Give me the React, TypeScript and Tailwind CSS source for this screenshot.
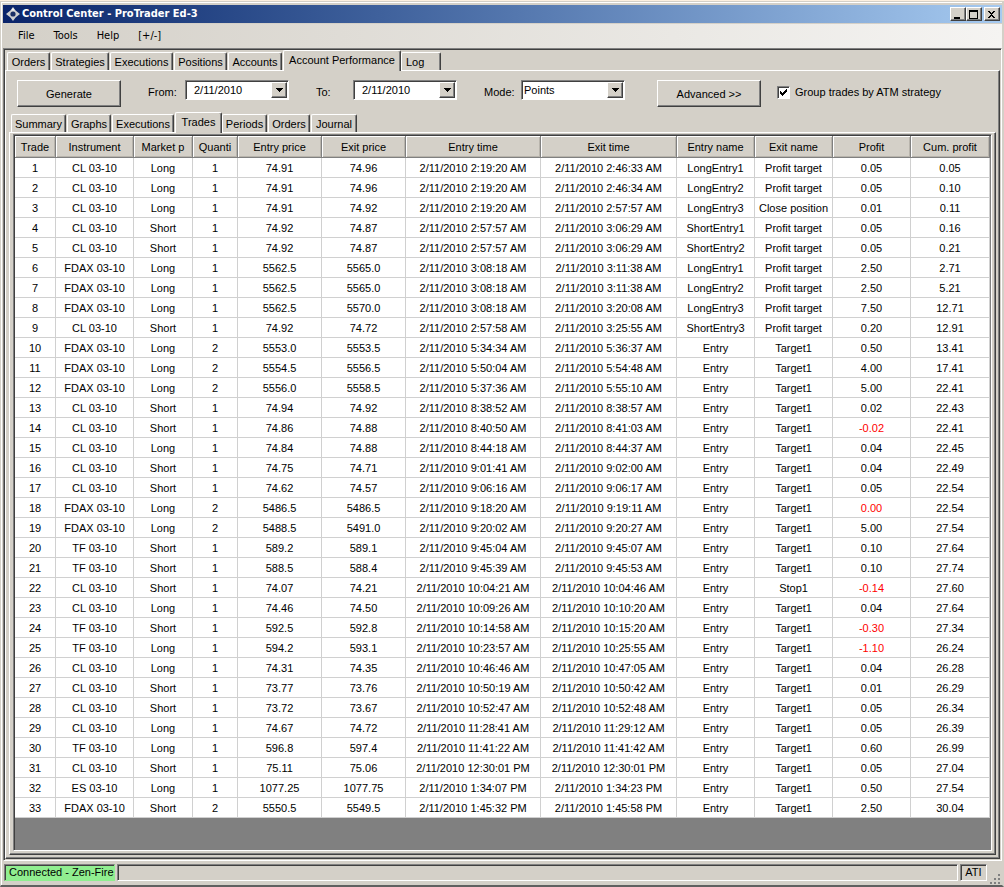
import { useState } from "react";
import type { ReactNode } from "react";

type Trade = [string, string, string, string, string, string, string, string, string, string, string];

const DAY = "2/11/2010 ";

// instrument, market pos, qty, entry price, exit price, entry time, exit time, entry name, exit name, profit, cum. profit
const trades: Trade[] = [
  ["CL 03-10", "Long", "1", "74.91", "74.96", "2:19:20 AM", "2:46:33 AM", "LongEntry1", "Profit target", "0.05", "0.05"],
  ["CL 03-10", "Long", "1", "74.91", "74.96", "2:19:20 AM", "2:46:34 AM", "LongEntry2", "Profit target", "0.05", "0.10"],
  ["CL 03-10", "Long", "1", "74.91", "74.92", "2:19:20 AM", "2:57:57 AM", "LongEntry3", "Close position", "0.01", "0.11"],
  ["CL 03-10", "Short", "1", "74.92", "74.87", "2:57:57 AM", "3:06:29 AM", "ShortEntry1", "Profit target", "0.05", "0.16"],
  ["CL 03-10", "Short", "1", "74.92", "74.87", "2:57:57 AM", "3:06:29 AM", "ShortEntry2", "Profit target", "0.05", "0.21"],
  ["FDAX 03-10", "Long", "1", "5562.5", "5565.0", "3:08:18 AM", "3:11:38 AM", "LongEntry1", "Profit target", "2.50", "2.71"],
  ["FDAX 03-10", "Long", "1", "5562.5", "5565.0", "3:08:18 AM", "3:11:38 AM", "LongEntry2", "Profit target", "2.50", "5.21"],
  ["FDAX 03-10", "Long", "1", "5562.5", "5570.0", "3:08:18 AM", "3:20:08 AM", "LongEntry3", "Profit target", "7.50", "12.71"],
  ["CL 03-10", "Short", "1", "74.92", "74.72", "2:57:58 AM", "3:25:55 AM", "ShortEntry3", "Profit target", "0.20", "12.91"],
  ["FDAX 03-10", "Long", "2", "5553.0", "5553.5", "5:34:34 AM", "5:36:37 AM", "Entry", "Target1", "0.50", "13.41"],
  ["FDAX 03-10", "Long", "2", "5554.5", "5556.5", "5:50:04 AM", "5:54:48 AM", "Entry", "Target1", "4.00", "17.41"],
  ["FDAX 03-10", "Long", "2", "5556.0", "5558.5", "5:37:36 AM", "5:55:10 AM", "Entry", "Target1", "5.00", "22.41"],
  ["CL 03-10", "Short", "1", "74.94", "74.92", "8:38:52 AM", "8:38:57 AM", "Entry", "Target1", "0.02", "22.43"],
  ["CL 03-10", "Short", "1", "74.86", "74.88", "8:40:50 AM", "8:41:03 AM", "Entry", "Target1", "-0.02", "22.41"],
  ["CL 03-10", "Long", "1", "74.84", "74.88", "8:44:18 AM", "8:44:37 AM", "Entry", "Target1", "0.04", "22.45"],
  ["CL 03-10", "Short", "1", "74.75", "74.71", "9:01:41 AM", "9:02:00 AM", "Entry", "Target1", "0.04", "22.49"],
  ["CL 03-10", "Short", "1", "74.62", "74.57", "9:06:16 AM", "9:06:17 AM", "Entry", "Target1", "0.05", "22.54"],
  ["FDAX 03-10", "Long", "2", "5486.5", "5486.5", "9:18:20 AM", "9:19:11 AM", "Entry", "Target1", "0.00", "22.54"],
  ["FDAX 03-10", "Long", "2", "5488.5", "5491.0", "9:20:02 AM", "9:20:27 AM", "Entry", "Target1", "5.00", "27.54"],
  ["TF 03-10", "Short", "1", "589.2", "589.1", "9:45:04 AM", "9:45:07 AM", "Entry", "Target1", "0.10", "27.64"],
  ["TF 03-10", "Short", "1", "588.5", "588.4", "9:45:39 AM", "9:45:53 AM", "Entry", "Target1", "0.10", "27.74"],
  ["CL 03-10", "Short", "1", "74.07", "74.21", "10:04:21 AM", "10:04:46 AM", "Entry", "Stop1", "-0.14", "27.60"],
  ["CL 03-10", "Long", "1", "74.46", "74.50", "10:09:26 AM", "10:10:20 AM", "Entry", "Target1", "0.04", "27.64"],
  ["TF 03-10", "Short", "1", "592.5", "592.8", "10:14:58 AM", "10:15:20 AM", "Entry", "Target1", "-0.30", "27.34"],
  ["TF 03-10", "Long", "1", "594.2", "593.1", "10:23:57 AM", "10:25:55 AM", "Entry", "Target1", "-1.10", "26.24"],
  ["CL 03-10", "Long", "1", "74.31", "74.35", "10:46:46 AM", "10:47:05 AM", "Entry", "Target1", "0.04", "26.28"],
  ["CL 03-10", "Short", "1", "73.77", "73.76", "10:50:19 AM", "10:50:42 AM", "Entry", "Target1", "0.01", "26.29"],
  ["CL 03-10", "Short", "1", "73.72", "73.67", "10:52:47 AM", "10:52:48 AM", "Entry", "Target1", "0.05", "26.34"],
  ["CL 03-10", "Long", "1", "74.67", "74.72", "11:28:41 AM", "11:29:12 AM", "Entry", "Target1", "0.05", "26.39"],
  ["TF 03-10", "Long", "1", "596.8", "597.4", "11:41:22 AM", "11:41:42 AM", "Entry", "Target1", "0.60", "26.99"],
  ["CL 03-10", "Short", "1", "75.11", "75.06", "12:30:01 PM", "12:30:01 PM", "Entry", "Target1", "0.05", "27.04"],
  ["ES 03-10", "Long", "1", "1077.25", "1077.75", "1:34:07 PM", "1:34:23 PM", "Entry", "Target1", "0.50", "27.54"],
  ["FDAX 03-10", "Short", "2", "5550.5", "5549.5", "1:45:32 PM", "1:45:58 PM", "Entry", "Target1", "2.50", "30.04"],
];

const columns = [
  { label: "Trade", width: "w-[41px]" },
  { label: "Instrument", width: "w-[78px]" },
  { label: "Market p", width: "w-[59px]" },
  { label: "Quanti", width: "w-[45px]" },
  { label: "Entry price", width: "w-[84px]" },
  { label: "Exit price", width: "w-[84px]" },
  { label: "Entry time", width: "w-[135px]" },
  { label: "Exit time", width: "w-[136px]" },
  { label: "Entry name", width: "w-[78px]" },
  { label: "Exit name", width: "w-[78px]" },
  { label: "Profit", width: "w-[78px]" },
  { label: "Cum. profit", width: "w-[79px]" },
];

const mainTabs = [
  { label: "Orders", width: "w-[43px]" },
  { label: "Strategies", width: "w-[58px]" },
  { label: "Executions", width: "w-[63px]" },
  { label: "Positions", width: "w-[53px]" },
  { label: "Accounts", width: "w-[54px]" },
  { label: "Account Performance", width: "w-[118px]" },
  { label: "Log", width: "w-[40px] pl-1 text-left" },
];

const reportTabs = [
  { label: "Summary", width: "w-[55px]" },
  { label: "Graphs", width: "w-[44px]" },
  { label: "Executions", width: "w-[62px]" },
  { label: "Trades", width: "w-[47px]" },
  { label: "Periods", width: "w-[45px]" },
  { label: "Orders", width: "w-[42px]" },
  { label: "Journal", width: "w-[46px]" },
];

const raised =
  "border border-t-white border-l-white border-r-[#404040] border-b-[#404040] shadow-[inset_-1px_-1px_0_#808080]";
const sunken =
  "border border-t-[#808080] border-l-[#808080] border-r-white border-b-white shadow-[inset_1px_1px_0_#404040]";

function Tabs({ tabs, initial, name }: { tabs: { label: string; width: string }[]; initial: string; name: string }) {
  const [active, setActive] = useState(initial);
  return (
    <div role="tablist" aria-label={name} className="flex h-5 items-end">
      {tabs.map((t) => {
        const on = t.label === active;
        return (
          <button
            key={t.label}
            role="tab"
            aria-selected={on}
            onClick={() => setActive(t.label)}
            className={`${t.width} shrink-0 rounded-t-[2px] border-t border-r border-l border-t-white border-r-[#404040] border-l-white bg-[#d4d0c8] whitespace-nowrap shadow-[inset_-1px_0_0_#808080] ${
              on ? "relative -mb-px h-[21px] pb-[2px]" : "mr-px h-[18px]"
            }`}
          >
            {t.label}
          </button>
        );
      })}
    </div>
  );
}

function CaptionButton({ label, children }: { label: string; children: ReactNode }) {
  return (
    <button aria-label={label} className={`flex h-[14px] w-4 items-center justify-center bg-[#d4d0c8] ${raised}`}>
      <svg width="10" height="9" viewBox="0 0 10 9" shapeRendering="crispEdges">
        {children}
      </svg>
    </button>
  );
}

function Combo({ id, label, value, indent }: { id: string; label: string; value: string; indent: string }) {
  return (
    <div className="flex">
      <label htmlFor={id} className="w-[37px] leading-6">
        {label}
      </label>
      <div className={`relative h-5 w-[104px] bg-white ${sunken}`}>
        <select id={id} defaultValue={value} className={`h-full w-full appearance-none pb-px outline-none ${indent}`}>
          <option>{value}</option>
        </select>
        <span
          className={`pointer-events-none absolute top-px right-px bottom-px flex w-4 items-center justify-center bg-[#d4d0c8] ${raised}`}
        >
          <svg width="7" height="4" viewBox="0 0 7 4" shapeRendering="crispEdges">
            <path d="M0 0h7v1H6v1H5v1H4v1H3V3H2V2H1V1H0z" />
          </svg>
        </span>
      </div>
    </div>
  );
}

function TradeGrid() {
  return (
    <table className="w-full table-fixed border-separate border-spacing-0 text-center">
      <thead>
        <tr>
          {columns.map((c) => (
            <th
              key={c.label}
              className={`${c.width} h-[22px] overflow-hidden border-r border-b border-[#808080] bg-[#d4d0c8] p-0 pt-px font-normal whitespace-nowrap shadow-[inset_1px_1px_0_#fff,inset_-1px_-1px_0_#b8b4ac]`}
            >
              {c.label}
            </th>
          ))}
        </tr>
      </thead>
      <tbody>
        {trades.map(([instrument, pos, qty, entry, exit, entryTime, exitTime, entryName, exitName, profit, cum], i) => (
          <tr key={i}>
            {[i + 1, instrument, pos, qty, entry, exit, DAY + entryTime, DAY + exitTime, entryName, exitName, profit, cum].map(
              (cell, j) => (
                <td
                  key={j}
                  className={`h-5 border-r border-b border-[#d0d0d0] bg-white p-0 whitespace-nowrap ${
                    j === 10 && Number(profit) <= 0 ? "text-[#ff0000]" : ""
                  }`}
                >
                  {cell}
                </td>
              )
            )}
          </tr>
        ))}
      </tbody>
    </table>
  );
}

export default function App() {
  return (
    <div className="flex min-h-screen flex-col bg-[#d4d0c8] font-['Liberation_Sans',Arial,sans-serif] text-[11px] leading-[14px] text-black">
      <div className="h-px bg-[#fdf0e0]" />
      <div className="flex grow flex-col border-t border-r-2 border-b-2 border-l border-t-[#d4d0c8] border-r-[#d4d0c8] border-b-[#606060] border-l-[#d4d0c8]">
        <div className="flex grow flex-col border-t border-l border-white pt-[2px] pl-px">
          <header className="flex h-[18px] items-center gap-[2px] bg-linear-to-r from-[#0a246a] to-[#a6caf0] pr-[2px] pl-[3px]">
            <svg width="14" height="14" viewBox="0 0 14 14">
              <path
                d="M7 0 9.400 3.200 10.800 4.600 14 7 10.800 9.400 9.400 10.800 7 14 4.600 10.800 3.200 9.400 0 7 3.200 4.600 4.600 3.200z"
                fill="#d0d0d0"
              />
              <path d="M7 1 8.800 3.600H5.200z" fill="#f4f4f4" />
              <circle cx="7" cy="7" r="2.600" fill="#1b2f66" />
            </svg>
            <h1 className="grow font-['DejaVu_Sans_Condensed','DejaVu_Sans',sans-serif] font-bold text-white">
              Control Center - ProTrader Ed-3
            </h1>
            <div className="flex">
              <CaptionButton label="Minimize">
                <path d="M1 7h6v2H1z" />
              </CaptionButton>
              <CaptionButton label="Maximize">
                <path d="M0 0h9v9H0zM1 2v6h7V2z" fillRule="evenodd" />
              </CaptionButton>
              <span className="w-[2px]" />
              <CaptionButton label="Close">
                <path d="M1 1h2v1h1v1h1V2h1V1h2v1H7v1H6v1H5v1h1v1h1v1h1v1H6V7H5V6H4v1H3v1H1V7h1V6h1V5h1V4H3V3H2V2H1z" />
              </CaptionButton>
            </div>
          </header>
          <nav className="flex h-[25px] items-center gap-[19px] border-t border-t-[#d4d0c8] bg-linear-to-r from-[#d4d0c8] to-[#f5f4f2] pl-[15px] font-['DejaVu_Sans_Condensed','DejaVu_Sans',sans-serif]">
            <button>File</button>
            <button>Tools</button>
            <button>Help</button>
            <button>[+/-]</button>
          </nav>
          <main className={`flex grow flex-col pt-[1px] pl-[1px] ${sunken}`}>
            <div className="pl-[2px]">
              <Tabs tabs={mainTabs} initial="Account Performance" name="Windows" />
            </div>
            <section className={`mr-px mb-px flex grow flex-col px-[3px] pb-[3px] ${raised}`}>
              <form className="flex h-[41px] items-start pt-[9px] pl-2" onSubmit={(e) => e.preventDefault()}>
                <button className={`mr-[27px] h-[27px] w-[104px] ${raised}`}>Generate</button>
                <div className="flex gap-[27px]">
                  <Combo id="from" label="From:" value="2/11/2010" indent="pl-2" />
                  <Combo id="to" label="To:" value="2/11/2010" indent="pl-2" />
                  <Combo id="mode" label="Mode:" value="Points" indent="pl-[2px]" />
                </div>
                <button className={`ml-8 h-[27px] w-[104px] ${raised}`}>Advanced &gt;&gt;</button>
                <label className="ml-4 flex h-6 items-center gap-[5px]">
                  <span className={`relative h-[13px] w-[13px] bg-white ${sunken}`}>
                    <input type="checkbox" defaultChecked className="peer absolute inset-0 appearance-none" />
                    <svg
                      width="7"
                      height="7"
                      viewBox="0 0 7 7"
                      shapeRendering="crispEdges"
                      className="pointer-events-none absolute top-[2px] left-[2px] hidden peer-checked:block"
                    >
                      <path d="M0 2h1v1h1v1h1V3h1V2h1V1h1V0h1v3H6v1H5v1H4v1H3v1H2V6H1V5H0z" />
                    </svg>
                  </span>
                  Group trades by ATM strategy
                </label>
              </form>
              <div className="pl-[2px]">
                <Tabs tabs={reportTabs} initial="Trades" name="Report" />
              </div>
              <div className={`flex grow flex-col pt-px pr-[3px] pb-[3px] pl-[3px] ${raised}`}>
                <div className={`grow bg-[#808080] pt-px pr-px pl-px ${sunken}`}>
                  <TradeGrid />
                </div>
              </div>
            </section>
          </main>
          <footer className="flex h-6 items-start gap-[2px] pt-[3px] pr-px pl-px">
            <div className="h-[17px] w-[111px] border border-t-[#808080] border-r-[#90ee90] border-b-[#90ee90] border-l-[#808080] bg-[#90ee90] pl-1 whitespace-nowrap shadow-[inset_1px_1px_0_#404040]">
              Connected - Zen-Fire
            </div>
            <div className={`h-[17px] grow ${sunken}`} />
            <div className={`h-[17px] w-[27px] text-center ${sunken}`}>ATI</div>
            <svg width="12" height="12" viewBox="0 0 12 12" className="self-end" shapeRendering="crispEdges">
              <path d="M9 1h2v2H9zM5 5h2v2H5zM9 5h2v2H9zM1 9h2v2H1zM5 9h2v2H5zM9 9h2v2H9z" fill="#808080" />
            </svg>
          </footer>
        </div>
      </div>
    </div>
  );
}
